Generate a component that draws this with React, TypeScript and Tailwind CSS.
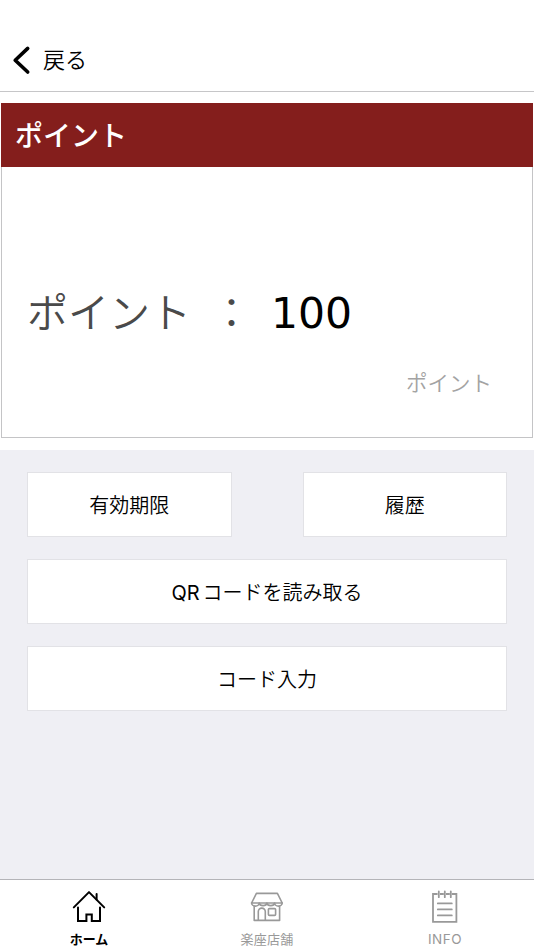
import React from "react";

interface Tab {
    label: string;
    active?: boolean;
    icon: React.ReactNode;
}

const HomeIcon = () => (
    <svg width="34" height="34" viewBox="0 0 34 34" fill="none" stroke="currentColor" strokeWidth="2" strokeLinecap="round" strokeLinejoin="round">
        <path d="M1.8 17.4 17 2.1 32.2 17.4" />
        <path d="M24.6 9.4V4" />
        <path d="M6 17.6V31H14.4V24.4H19.8V31H28V17.6" strokeLinejoin="miter" />
    </svg>
);

const ShopIcon = () => (
    <svg width="34" height="34" viewBox="0 0 34 34" fill="none" stroke="currentColor" strokeWidth="1.6" strokeLinecap="round" strokeLinejoin="round">
        <path d="M6.4 3.4H27.4L32.2 13H1.6Z" />
        <path d="M1.6 13a3.8 3.1 0 0 0 7.6 0a3.9 3.1 0 0 0 7.7 0a3.9 3.1 0 0 0 7.7 0a3.8 3.1 0 0 0 7.6 0" />
        <path d="M4.2 16V30.4H29.6V16" />
        <path d="M8.3 30.2V21.6a3.5 3.5 0 0 1 7 0V30.2" />
        <rect x="18.4" y="18.6" width="7.2" height="6.8" rx="1" />
    </svg>
);

const NoteIcon = () => (
    <svg width="34" height="34" viewBox="0 0 34 34" fill="none" stroke="currentColor" strokeWidth="1.8">
        <path d="M9.6 4H5V31.8H28.4V4H23.8M12 4H15.8M18 4H21.8" />
        <path d="M10.8 1.4V7.2M16.8 1.4V7.2M22.8 1.4V7.2" strokeLinecap="round" />
        <path d="M9.8 13.4H23.8M9.8 19.4H23.8M9.8 25.4H23.8" strokeLinecap="round" />
    </svg>
);

const tabs: Tab[] = [
    { label: "ホーム", active: true, icon: <HomeIcon /> },
    { label: "楽座店舗", icon: <ShopIcon /> },
    { label: "INFO", icon: <NoteIcon /> },
];

const MenuButton = ({ children }: { children: React.ReactNode }) => (
    <button className="flex h-[65px] w-full items-center justify-center border border-[#e2e2e6] bg-white pt-[3px] text-[20px] font-[350] text-black">
        {children}
    </button>
);

export default function App() {
    return (
        <div className="flex h-[950px] w-full flex-col bg-white font-['Inter','Noto_Sans_CJK_JP',sans-serif]">
            <header className="flex h-[92px] shrink-0 items-end border-b border-[#c6c6c8] pb-4 pl-3">
                <svg width="19" height="30" viewBox="0 0 19 30" fill="none" stroke="#000" strokeWidth="3.6" strokeLinecap="round" strokeLinejoin="round">
                    <path d="M15.7 3.4 3.2 15.2 15.7 27" />
                </svg>
                <span className="ml-3 text-[22px] leading-[30px] font-[350]">戻る</span>
            </header>

            <section className="mx-px mt-[11px] flex h-[335px] shrink-0 flex-col border-x border-b border-[#c4c4c6]">
                <h1 className="-mx-px flex h-16 items-center bg-[#841e1c] pt-0.5 pl-[14px] text-[28px] font-medium text-white">ポイント</h1>
                <div className="mt-[117px] flex h-[60px] items-center pl-[25px] text-[41px] font-[350] text-[#4a4a4a]">
                    <span>ポイント</span>
                    <span className="ml-5">：</span>
                    <span className="ml-[19px] font-['DejaVu_Sans',sans-serif] text-[42.5px] font-normal text-black">100</span>
                </div>
                <p className="mt-[23px] pr-[40px] text-right text-[21.5px] leading-8 font-[350] text-[#a3a3a3]">ポイント</p>
            </section>

            <main className="mt-3 flex grow flex-col gap-[22px] bg-[#efeff4] px-[27px] pt-[22px]">
                <div className="grid grid-cols-2 gap-[71px]">
                    <MenuButton>有効期限</MenuButton>
                    <MenuButton>履歴</MenuButton>
                </div>
                <MenuButton>
                    <span className="mr-[3px] font-normal">QR</span>コードを読み取る
                </MenuButton>
                <MenuButton>コード入力</MenuButton>
            </main>

            <nav className="grid h-[71px] shrink-0 grid-cols-3 border-t border-[#b4b4b8] bg-white">
                {tabs.map(tab =>
                    <a
                        key={tab.label}
                        className={tab.active
                            ? "flex flex-col items-center pt-[10px] text-[13px] font-bold text-black"
                            : "flex flex-col items-center pt-[10px] text-[13px] font-normal tracking-[0.2px] text-[#999]"}
                    >
                        {tab.icon}
                        <span className={tab.label === "INFO" ? "mt-[5px] text-[13.5px] leading-5 tracking-[0.5px]" : "mt-[5px] leading-5"}>{tab.label}</span>
                    </a>
                )}
            </nav>
        </div>
    );
}
